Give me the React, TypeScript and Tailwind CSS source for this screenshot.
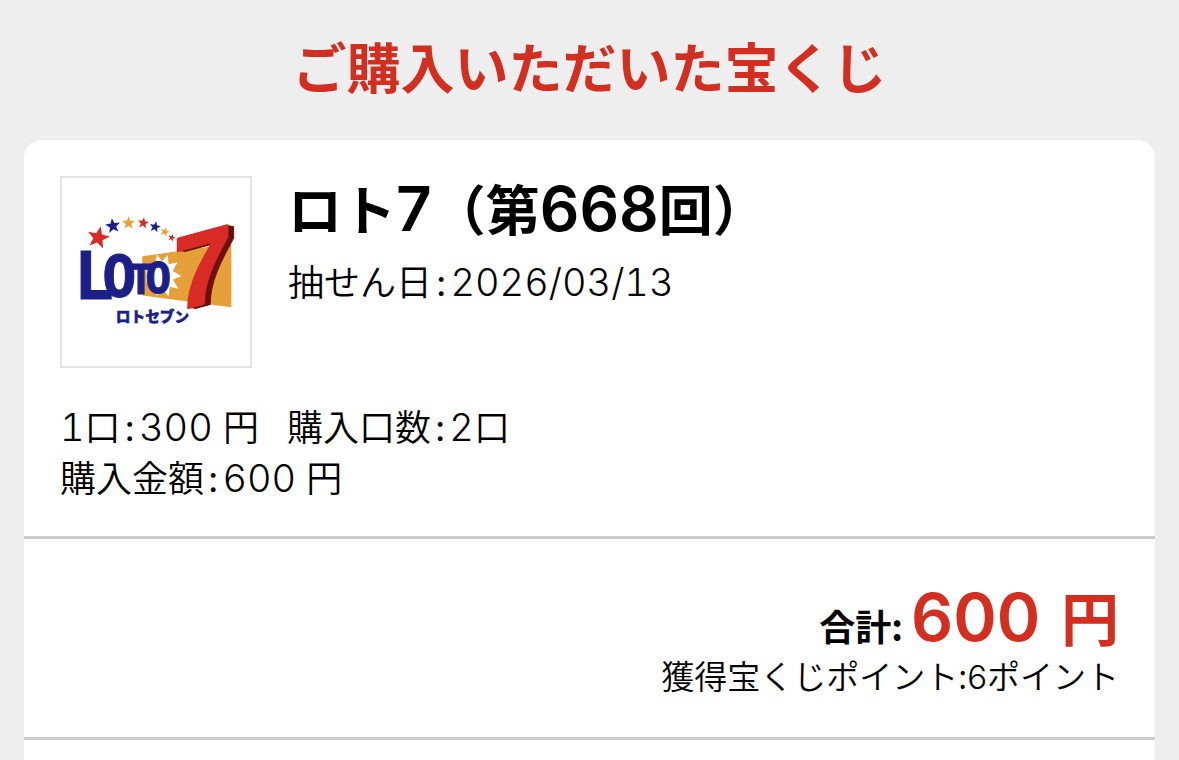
import type { ReactNode } from "react";

const stars = [
  { x: 41, y: 65, r: 12, fill: "#d92b26", turn: 12 },
  { x: 56, y: 53, r: 8, fill: "#1c1f87", turn: -8 },
  { x: 72, y: 50, r: 7, fill: "#e5a13a", turn: 0 },
  { x: 87, y: 50, r: 6, fill: "#d92b26", turn: 8 },
  { x: 99, y: 54, r: 6, fill: "#1c1f87", turn: 12 },
  { x: 109, y: 59, r: 5, fill: "#e5a13a", turn: 18 },
  { x: 116, y: 65, r: 4, fill: "#d92b26", turn: 20 },
];

const depth = [6, 5, 4, 3, 2, 1];

function LotoLogo() {
  return (
    <svg viewBox="4 4 192 192" className="h-full w-full" role="img" aria-label="ロト7">
      <defs>
        <linearGradient id="side" x1="0" y1="0" x2="0" y2="1">
          <stop offset="0" stopColor="#3a0907" />
          <stop offset="0.5" stopColor="#8d1712" />
          <stop offset="1" stopColor="#5c0e0a" />
        </linearGradient>
      </defs>
      {stars.map((s) => (
        <path
          key={s.x}
          transform={`translate(${s.x} ${s.y}) rotate(${s.turn}) scale(${s.r})`}
          d="M0-1 .25-.34 .95-.31 .4 .13 .59 .81 0 .42-.59 .81-.4 .13-.95-.31-.25-.34Z"
          fill={s.fill}
        />
      ))}
      <path d="M86 84 177 71V136L86 124Z" fill="#e6a03a" />
      <path
        d="M101 82 106 89 112 83 113 92 122 90 117 99 126 104 117 108 123 117 114 115 113 125 107 118 101 124 98 116 90 110V94L99 92Z"
        fill="#fff"
      />
      <text
        fontFamily="'DejaVu Sans Mono', monospace"
        fontWeight="700"
        fill="#1c1f87"
        stroke="#1c1f87"
        strokeWidth="1"
      >
        <tspan x="16" y="128" fontSize="68">L</tspan>
        <tspan x="45" y="126" fontSize="58">O</tspan>
        <tspan x="72" y="122" fontSize="42">T</tspan>
        <tspan x="89" y="121" fontSize="44">O</tspan>
      </text>
      <g
        transform="translate(119 140) skewY(-15)"
        fontFamily="'Liberation Sans', sans-serif"
        fontWeight="700"
        fontSize="106"
        strokeLinejoin="round"
      >
        {depth.map((d) => (
          <text key={d} x={d} y={d / 2} fill="url(#side)" stroke="#6b110d" strokeWidth="1">7</text>
        ))}
        <text x="-1" y="0" fill="#d92b26" stroke="#d92b26" strokeWidth="3">7</text>
      </g>
      <text
        x="59"
        y="151"
        fontFamily="'Noto Sans CJK JP', sans-serif"
        fontSize="15"
        fontWeight="900"
        fill="#1c1f87"
        stroke="#1c1f87"
        strokeWidth="0.5"
      >
        ロトセブン
      </text>
    </svg>
  );
}

function Num({ children }: { children: ReactNode }) {
  return (
    <span className="font-['Inter'] text-[38px] leading-none font-light tabular-nums">{children}</span>
  );
}

function Label({ children }: { children: ReactNode }) {
  return (
    <>
      {children}
      <span className="mx-1 font-['Inter'] leading-none font-normal">:</span>
    </>
  );
}

export default function App() {
  return (
    <div className="min-h-screen bg-[#eeeeee] px-6 font-['Noto_Sans_CJK_JP',sans-serif] text-black">
      <h1 className="pt-8 pb-10 text-center text-[54px] leading-[68px] font-bold text-[#d32f20]">
        ご購入いただいた宝くじ
      </h1>
      <main className="min-h-[calc(100vh-140px)] rounded-t-[18px] bg-white">
        <section className="border-b-3 border-[#cccccc] p-9 pb-[34px]">
          <div className="flex gap-9">
            <div className="h-48 w-48 shrink-0 border-2 border-[#e2e2e2]">
              <LotoLogo />
            </div>
            <div>
              <h2 className="text-[54px] leading-[64px] font-bold">
                ロト<span className="font-['Inter'] text-[62px] leading-none font-semibold">7</span>（第
                <span className="font-['Inter'] text-[62px] leading-none font-semibold">668</span>回）
              </h2>
              <p className="mt-3.5 text-4xl leading-[52px] font-[350]">
                <Label>抽せん日</Label>
                <Num>2026/03/13</Num>
              </p>
            </div>
          </div>
          <div className="mt-8 text-4xl leading-[51px] font-[350]">
            <p className="flex gap-7">
              <span>
                <Num>1</Num>
                <Label>口</Label>
                <Num>300 </Num>円
              </span>
              <span>
                <Label>購入口数</Label>
                <Num>2</Num>口
              </span>
            </p>
            <p>
              <Label>購入金額</Label>
              <Num>600 </Num>円
            </p>
          </div>
        </section>
        <section className="border-b-3 border-[#cccccc] px-9 pt-[45px] pb-[42px] text-right">
          <p className="text-4xl leading-[60px] font-bold">
            合計:{" "}
            <span className="text-[58px] leading-none text-[#d32f20]">
              <span className="mr-1 font-['Inter'] text-[66px] leading-none font-semibold">600 </span>円
            </span>
          </p>
          <p className="text-[33px] leading-[40px] font-[350]">
            獲得宝くじポイント:<span className="font-['Inter'] leading-none font-light">6</span>ポイント
          </p>
        </section>
      </main>
    </div>
  );
}
